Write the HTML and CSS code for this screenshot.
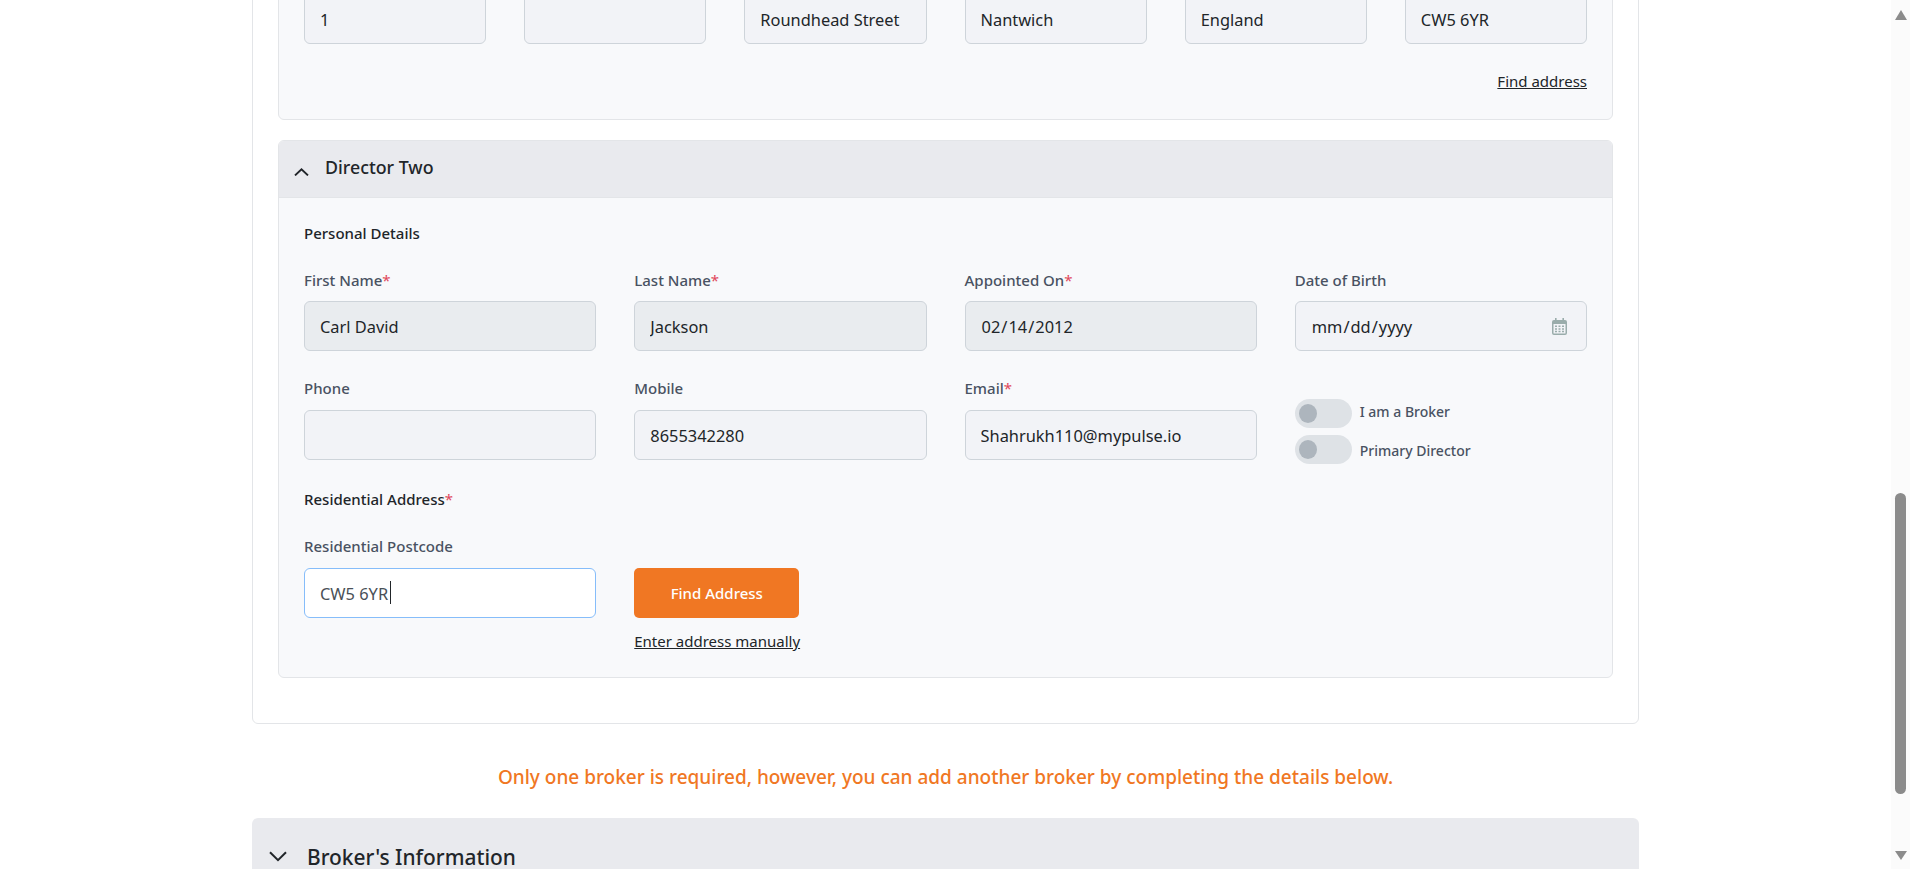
FILE: index.html
```html
<!DOCTYPE html>
<html lang="en">
<head>
<meta charset="utf-8">
<title>Director details</title>
<link rel="stylesheet" href="styles.css">
</head>
<body>
<main class="page">
  <section class="card">
    <div class="panel panel-first">
      <div class="panel-body address-body">
        <div class="grid-six">
          <input class="field" type="text" value="1" readonly>
          <input class="field" type="text" value="" readonly>
          <input class="field" type="text" value="Roundhead Street" readonly>
          <input class="field" type="text" value="Nantwich" readonly>
          <input class="field" type="text" value="England" readonly>
          <input class="field" type="text" value="CW5 6YR" readonly>
        </div>
        <div class="find-row"><a class="link" href="#">Find address</a></div>
      </div>
    </div>

    <div class="panel panel-second">
      <header class="panel-head">
        <svg class="chev-small" viewBox="0 0 15 8" width="15" height="8"><path d="M1 7.4L7.5 1.4L14 7.4" fill="none" stroke="#212529" stroke-width="1.9"/></svg>
        <h3 class="panel-title">Director Two</h3>
      </header>
      <div class="panel-body">
        <h4 class="subhead first-sub">Personal Details</h4>
        <div class="grid-four">
          <div class="group">
            <label class="label">First Name<span class="req">*</span></label>
            <input class="field locked" type="text" value="Carl David" readonly>
          </div>
          <div class="group">
            <label class="label">Last Name<span class="req">*</span></label>
            <input class="field locked" type="text" value="Jackson" readonly>
          </div>
          <div class="group">
            <label class="label">Appointed On<span class="req">*</span></label>
            <input class="field locked date" type="date" value="2012-02-14" disabled>
          </div>
          <div class="group">
            <label class="label">Date of Birth</label>
            <div class="date-wrap">
              <input class="field date" type="date">
              <svg class="cal-icon" viewBox="0 0 15 17" width="15" height="17">
                <path d="M3 0h1.6v2h5.8V0H12v2h1a2 2 0 0 1 2 2v11a2 2 0 0 1-2 2H2a2 2 0 0 1-2-2V4a2 2 0 0 1 2-2h1zM1.5 6v9a.5.5 0 0 0 .5.5h11a.5.5 0 0 0 .5-.5V6z" fill="#9aacab" fill-rule="evenodd"/>
                <path d="M3 7.5h2v1.6H3zM6.5 7.5h2v1.6h-2zM10 7.5h2v1.6h-2zM3 10.2h2v1.6H3zM6.5 10.2h2v1.6h-2zM10 10.2h2v1.6h-2zM3 12.8h2v1.4H3zM6.5 12.8h2v1.4h-2zM10 12.8h2v1.4h-2z" fill="#9aacab"/>
              </svg>
            </div>
          </div>
          <div class="group">
            <label class="label label-low">Phone</label>
            <input class="field" type="text" value="" readonly>
          </div>
          <div class="group">
            <label class="label label-low">Mobile</label>
            <input class="field" type="text" value="8655342280" readonly>
          </div>
          <div class="group">
            <label class="label label-low">Email<span class="req">*</span></label>
            <input class="field" type="text" value="Shahrukh110@mypulse.io" readonly>
          </div>
          <div class="toggles">
            <div class="toggle-row"><span class="toggle"><span class="knob"></span></span><span class="toggle-label up">I am a Broker</span></div>
            <div class="toggle-row"><span class="toggle"><span class="knob"></span></span><span class="toggle-label down">Primary Director</span></div>
          </div>
        </div>
        <h4 class="subhead res-sub">Residential Address<span class="req">*</span></h4>
        <div class="grid-four postcode-grid">
          <div class="group">
            <label class="label label-low">Residential Postcode</label>
            <div class="caret-wrap">
              <input class="field focused" type="text" value="CW5 6YR" readonly>
              <span class="caret"></span>
            </div>
          </div>
          <div class="group actions">
            <button class="btn" type="button">Find Address</button>
            <a class="link manual" href="#">Enter address manually</a>
          </div>
        </div>
      </div>
    </div>
  </section>

  <p class="notice">Only one broker is required, however, you can add another broker by completing the details below.</p>

  <header class="broker-bar">
    <svg class="chev-big" viewBox="0 0 18 11" width="18" height="11"><path d="M1 1.2L9 9.2L17 1.2" fill="none" stroke="#212529" stroke-width="2"/></svg>
    <h2 class="broker-title">Broker's Information</h2>
  </header>
</main>
<aside class="scrollbar" aria-hidden="true">
  <span class="arrow-up"></span>
  <span class="thumb"></span>
  <span class="arrow-down"></span>
</aside>
</body>
</html>
```
FILE: styles.css
```css
* { box-sizing: border-box; }
html, body { margin: 0; height: 100%; }
body {
  display: flex;
  height: 869px;
  overflow: hidden;
  background: #fff;
  font-family: "Noto Sans", "Open Sans", sans-serif;
  color: #212529;
}
.page { flex: 1; min-width: 0; overflow: hidden; }
.card {
  width: 1387px;
  margin: -33px auto 0;
  padding: 25px 25px 45px;
  border: 1px solid #e3e5e8;
  border-radius: 6px;
}
.panel {
  background: #f8f9fb;
  border: 1px solid #e3e5e8;
  border-radius: 6px;
}
.panel-second { margin-top: 20px; }
.panel-head {
  display: flex;
  align-items: center;
  height: 57px;
  padding-left: 15px;
  background: #e9eaee;
  border-bottom: 1px solid #e3e5e8;
  border-radius: 5px 5px 0 0;
}
.chev-small { margin: 6px 9px 0 0; flex: none; }
.panel-title { margin: 0 0 5px 7px; font-size: 17.8px; line-height: 24px; font-weight: 500; }
.panel-body { padding: 25px 25px 25px; }
.address-body { padding: 0 25px 27px; }
.grid-six { display: grid; grid-template-columns: repeat(6, 1fr); column-gap: 38px; }
.grid-four { display: grid; grid-template-columns: repeat(4, 1fr); column-gap: 38px; row-gap: 27px; }
.find-row { display: flex; justify-content: flex-end; margin-top: 27px; }
.link { font-size: 15px; line-height: 21px; color: #212529; text-decoration: underline; }
.subhead { margin: 0; font-size: 15px; line-height: 21px; font-weight: 500; color: #212529; }
.first-sub { margin-bottom: 26px; }
.res-sub { margin: 25px 0 26px; }
.label { display: block; margin-bottom: 10px; font-size: 15px; line-height: 21px; font-weight: 500; color: #495262; }
.label-low { margin-bottom: 11px; }
.req { color: #e0475a; font-weight: 400; }
.field {
  display: block;
  width: 100%;
  height: 50px;
  padding: 0 15px;
  font: 400 16.4px "Noto Sans", "Open Sans", sans-serif;
  color: #212529;
  background: #f2f3f7;
  border: 1px solid #ced4da;
  border-radius: 6px;
  outline: none;
  opacity: 1;
}
.locked { background: #e9ecef; }
.date { padding-right: 14px; }
.date-wrap { position: relative; }
.date-wrap .date::-webkit-calendar-picker-indicator { opacity: 0; }
.cal-icon { position: absolute; right: 20px; top: 17px; }
.focused { background: #fff; border-color: #86bdfa; color: #495057; }
.caret-wrap { position: relative; }
.caret { position: absolute; left: 86px; top: 13px; width: 1px; height: 23px; background: #212529; }
.toggles { padding-top: 21px; display: flex; flex-direction: column; gap: 7px; }
.toggle-row { display: flex; align-items: center; gap: 8px; }
.toggle { display: flex; align-items: center; width: 57px; height: 29px; padding-left: 4px; background: #dee2e6; border-radius: 15px; flex: none; }
.knob { width: 18px; height: 19px; background: #adb5bd; border-radius: 50%; }
.toggle-label { font-size: 14px; line-height: 21px; font-weight: 500; color: #495262; }
.toggle-label.up { margin-bottom: 4px; }
.toggle-label.down { margin-top: 2px; }
.actions { display: flex; flex-direction: column; align-items: flex-start; padding-top: 32px; }
.btn {
  width: 165px;
  height: 50px;
  font: 500 15px "Noto Sans", "Open Sans", sans-serif;
  color: #fff;
  background: #f07723;
  border: 0;
  border-radius: 5px;
}
.manual { margin-top: 13px; }
.notice {
  margin: 40px 0 27px;
  text-align: center;
  font-size: 19px;
  line-height: 27px;
  font-weight: 500;
  color: #f07723;
}
.broker-bar {
  display: flex;
  align-items: center;
  width: 1387px;
  height: 76px;
  margin: 0 auto;
  padding-left: 17px;
  background: #e9eaee;
  border-radius: 6px 6px 0 0;
}
.chev-big { flex: none; margin-right: 20px; }
.broker-title { margin: 1px 0 0; font-size: 20.9px; line-height: 22px; font-weight: 500; color: #212529; }
.scrollbar {
  flex: none;
  width: 19px;
  height: 869px;
  display: flex;
  flex-direction: column;
  align-items: center;
  background: #fbfbfb;
}
.arrow-up { margin-top: 10px; border: 6.5px solid transparent; border-top: 0; border-bottom: 10px solid #8b8b8b; }
.thumb { width: 11px; height: 301px; margin-top: 473px; background: #8b8b8b; border-radius: 6px; }
.arrow-down { margin-top: 57px; border: 6.5px solid transparent; border-bottom: 0; border-top: 9px solid #8b8b8b; }
```
